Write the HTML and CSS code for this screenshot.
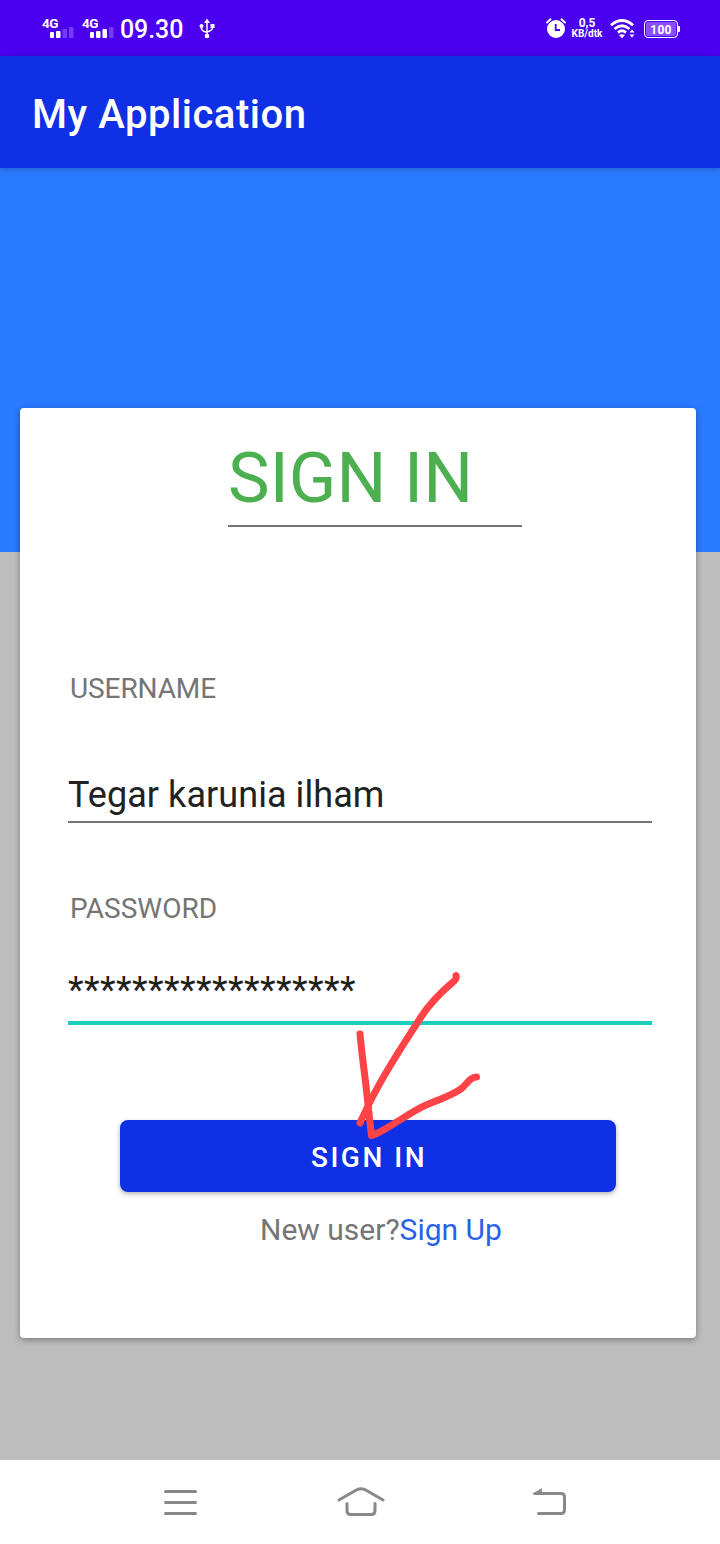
FILE: index.html
```html
<!DOCTYPE html>
<html lang="id">
<head>
<meta charset="utf-8">
<title>My Application</title>
<link rel="stylesheet" href="styles.css">
</head>
<body>
<div class="status">
  <div class="sim"><span class="net">4G</span>
    <svg class="bars" width="24" height="12" viewBox="0 0 24 12" fill="#fff"><rect x="0" y="6" width="4" height="6" rx="1"/><rect x="6" y="5" width="4.500" height="7" rx="1"/><g opacity=".23"><rect x="12.500" y="3" width="4.500" height="9" rx="1"/><rect x="19" y="1" width="4.500" height="11" rx="1"/></g></svg></div>
  <div class="sim"><span class="net">4G</span>
    <svg class="bars" width="24" height="12" viewBox="0 0 24 12" fill="#fff"><rect x="0" y="6" width="4" height="6" rx="1"/><rect x="6" y="5" width="4.500" height="7" rx="1"/><rect x="12.500" y="3" width="4.500" height="9" rx="1"/><rect x="19" y="1" width="4.500" height="11" rx="1" opacity=".23"/></svg></div>
  <span class="clock">09.30</span>
  <svg class="usb" width="16" height="22" viewBox="0 0 16 22" fill="none" stroke="#fff" stroke-width="1.500"><path d="M8 4v13M2.500 8v2.500Q2.500 13 8 14.500M13.500 8v1.500Q13.500 12.500 8 14"/><path fill="#fff" stroke="none" d="M8 .5l3 4.500H5zM11.500 6h4v4h-4z"/><circle cx="2.500" cy="8" r="2" fill="#fff" stroke="none"/><circle cx="8" cy="18" r="2.300" fill="#fff" stroke="none"/></svg>
  <svg class="alarm" width="20" height="20" viewBox="0 0 20 20"><circle cx="10" cy="11" r="9" fill="#fff"/><path d="M1 4.500L4.500 1.300M19 4.500L15.500 1.300" stroke="#fff" stroke-width="2" stroke-linecap="round"/><path d="M9.700 6v6h4.300" fill="none" stroke="#4b00f0" stroke-width="1.800"/></svg>
  <div class="speed"><span class="rate">0,5</span><span class="unit">KB/dtk</span></div>
  <svg class="wifi" width="25" height="20" viewBox="0 0 25 20" fill="none" stroke="#fff" stroke-width="2.800"><path d="M1 6.200Q12 -3.200 23 6.200M4.500 10Q12 3.500 19.500 10M8 13.600Q12 10 16 13.600"/><path d="M9 16Q12 14.300 15 16L12 19.300z" fill="#fff" stroke="none"/><path d="M19.500 13.500L22 10.500l2.500 3zM19.500 15.500L22 18.500l2.500-3z" fill="#fff" stroke="none"/></svg>
  <div class="battery"><span class="level">100</span></div><i class="tip"></i>
</div>
<header class="appbar">My Application</header>
<main class="screen">
  <section class="card">
    <h1 class="title">SIGN IN</h1>
    <div class="label label-user">USERNAME</div>
    <div class="field field-user">Tegar karunia ilham</div>
    <div class="label label-pass">PASSWORD</div>
    <div class="field field-pass">******************</div>
    <div class="action"><div class="button">SIGN IN</div>
      <svg class="mark" width="130" height="175" viewBox="350 968 130 175" fill="none" stroke="#ff4346" stroke-width="7" stroke-linecap="round" stroke-linejoin="round"><path d="M456 975.500Q457 979 453 982C440 993 430 1003 421 1017C405 1042 386 1070 372 1098Q365 1112 360 1123"/><path d="M360 1034C362 1057 366 1082 368 1105Q370 1122 371.500 1135.500Q375 1135 385 1129C401 1120 411 1112 426 1105C441 1099 455 1094 462 1088C467 1084 470 1077 476.500 1077"/></svg>
    </div>
    <div class="signup">New user?<span class="link">Sign Up</span></div>
  </section>
</main>
<nav class="nav">
  <svg width="34" height="26" viewBox="0 0 34 26" fill="none" stroke="#888" stroke-width="3" stroke-linecap="round"><path d="M1.500 2.500h30M1.500 13.500h30M1.500 24.500h30"/></svg>
  <svg class="home" width="48" height="30" viewBox="0 0 48 30" fill="none" stroke="#888" stroke-width="3" stroke-linecap="round" stroke-linejoin="round"><path d="M2 14L18 4.800Q24 .700 30 4.800L46 14"/><path d="M10 18v7q0 4 4 4h20q4 0 4-4v-7" transform="translate(0 -.5)"/></svg>
  <svg class="back" width="35" height="28" viewBox="0 0 35 28" fill="none" stroke="#888" stroke-width="3" stroke-linecap="round"><path d="M3 6.500h26q3.500 0 3.500 3.500v13q0 3.500-3.500 3.500H6.500"/><path d="M0 7.200L9.800 1v6.500z" fill="#888" stroke="none"/></svg>
</nav>
</body>
</html>
```
FILE: styles.css
```css
body { margin: 0; width: 720px; height: 1544px; overflow: hidden; font-family: Roboto, sans-serif; display: flex; flex-direction: column; }
svg { display: block; flex: none; }
.status { height: 56px; background: #4b00f0; color: #fff; display: flex; align-items: flex-start; box-sizing: border-box; padding: 17px 0 0 42px; }
.sim { width: 40px; }
.net { display: block; font-size: 13.5px; line-height: 13px; height: 9px; font-weight: 700; letter-spacing: -.4px; }
.bars { margin-left: 7.500px; }
.clock { font-size: 25px; font-weight: 500; line-height: 26px; width: 79px; margin-left: -2px; letter-spacing: -.1px; }
.usb { margin-top: 1px; }
.alarm { margin: 1px 6px 0 331px; }
.speed { width: 30px; text-align: center; font-weight: 700; }
.rate { display: block; font-size: 12px; line-height: 12px; }
.unit { display: block; font-size: 10px; line-height: 10px; margin: 0 -4px; }
.wifi { margin: 2px 0 0 8px; }
.battery { box-sizing: border-box; width: 34px; height: 18px; margin: 3px 0 0 9px; border: 1.5px solid #fff; border-radius: 4px; background: #8a4dff; box-shadow: inset 0 0 0 1px #4b00f0; display: flex; justify-content: center; }
.level { font-size: 12px; line-height: 18px; font-weight: 700; letter-spacing: .2px; }
.tip { width: 2px; height: 6px; background: #fff; margin-top: 9px; border-radius: 0 1px 1px 0; }
.appbar { height: 112px; box-sizing: border-box; padding: 4px 0 0 32px; background: #1030e5; color: #fff; font-size: 40px; font-weight: 500; line-height: 110px; letter-spacing: .55px; position: relative; box-shadow: 0 1px 6px rgba(0,0,0,.22); }
.screen { height: 1292px; box-sizing: border-box; padding: 240px 24px 0 20px; background: linear-gradient(#297aff 384px, #bdbdbd 384px); }
.card { height: 930px; box-sizing: border-box; padding: 30px 44px 0 48px; background: #fff; border-radius: 4px; box-shadow: 0 2px 6px rgba(0,0,0,.35); }
.title { margin: 0 0 0 160px; width: 294px; height: 87px; border-bottom: 2px solid #757575; color: #4caf50; font-size: 70px; line-height: 80px; font-weight: 400; letter-spacing: .1px; }
.label { font-size: 28px; line-height: 40px; padding-left: 2px; color: #757575; }
.label-user { margin-top: 142px; letter-spacing: -.1px; }
.label-pass { margin-top: 66px; }
.field { font-size: 36px; line-height: 40px; height: 46px; color: #212121; }
.field-user { margin-top: 66px; border-bottom: 2px solid #757575; letter-spacing: .06px; }
.field-pass { margin-top: 41px; height: 51px; border-bottom: 4px solid #1ecdbe; letter-spacing: .5px; }
.action { position: relative; margin: 95px 36px 0 52px; }
.button { height: 72px; box-sizing: border-box; padding-left: 2px; border-radius: 8px; background: #1030e5; color: #fff; font-size: 28px; line-height: 76px; font-weight: 500; letter-spacing: 2.5px; text-align: center; box-shadow: 0 2px 5px rgba(0,0,0,.3); }
.mark { position: absolute; left: 230px; top: -152px; }
.signup { margin: 18px 0 0 192px; font-size: 30px; line-height: 40px; color: #757575; white-space: nowrap; }
.link { color: #2962e8; }
.nav { height: 84px; background: #fff; display: flex; align-items: flex-start; padding: 29px 0 0 164px; box-sizing: border-box; }
.home { margin: -3px 0 0 138.500px; }
.back { margin: -2px 0 0 147px; }
```
